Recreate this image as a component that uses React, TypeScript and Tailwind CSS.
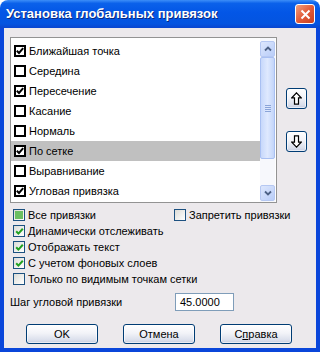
import React from "react";

const listItems = [
  { label: "Ближайшая точка", checked: true },
  { label: "Середина", checked: false },
  { label: "Пересечение", checked: true },
  { label: "Касание", checked: false },
  { label: "Нормаль", checked: false },
  { label: "По сетке", checked: true, selected: true },
  { label: "Выравнивание", checked: false },
  { label: "Угловая привязка", checked: true },
];

function ListCheck({ checked }: { checked: boolean }) {
  return (
    <div className="w-[12px] h-[12px] border-2 border-black bg-white flex items-center justify-center shrink-0">
      {checked && (
        <svg width="8" height="8" viewBox="0 0 8 8">
          <polyline points="0.8,3.8 3,6 7.2,1.2" fill="none" stroke="#000" strokeWidth="2" />
        </svg>
      )}
    </div>
  );
}

function XpCheck({ state }: { state: "on" | "off" | "mixed" }) {
  return (
    <div className="w-[12px] h-[12px] border border-[#1c5180] bg-[linear-gradient(135deg,#dcdcd7,#ffffff)] flex items-center justify-center shrink-0">
      {state === "on" && (
        <svg width="9" height="9" viewBox="0 0 9 9">
          <polyline points="1.2,4.2 3.4,6.6 7.8,1.8" fill="none" stroke="#21a121" strokeWidth="2" />
        </svg>
      )}
      {state === "mixed" && <div className="w-[8px] h-[8px] bg-[#6bbf63]" />}
    </div>
  );
}

function XpButton({ children, className = "" }: { children: React.ReactNode; className?: string }) {
  return (
    <div
      className={
        "flex items-center justify-center border border-[#003c74] rounded-[3px] bg-[linear-gradient(180deg,#ffffff_0%,#f2f3f8_45%,#d9deeb_85%,#c3cbe0_100%)] shadow-[inset_0_0_0_1px_rgba(255,255,255,0.6)] text-[11px] text-black " +
        className
      }
    >
      {children}
    </div>
  );
}

function BlockArrow({ down }: { down?: boolean }) {
  return (
    <svg width="11" height="13" viewBox="0 0 11 13" className={down ? "rotate-180" : ""}>
      <path d="M5.5 0.8 L10.2 5.8 L7.5 5.8 L7.5 12.2 L3.5 12.2 L3.5 5.8 L0.8 5.8 Z" fill="#fff" stroke="#000" strokeWidth="1.2" strokeLinejoin="miter" />
    </svg>
  );
}

function ScrollBtn({ down }: { down?: boolean }) {
  return (
    <div className="h-[16px] rounded-[2px] border border-[#b6c8f2] bg-[linear-gradient(135deg,#dde7fd,#b9cdf8)] flex items-center justify-center">
      <svg width="8" height="6" viewBox="0 0 8 6" className={down ? "rotate-180" : ""}>
        <polyline points="1,4.5 4,1.5 7,4.5" fill="none" stroke="#4d6185" strokeWidth="1.8" />
      </svg>
    </div>
  );
}

export default function App() {
  return (
    <div className="w-[322px] h-[357px] bg-white font-['Liberation_Sans',Arial,sans-serif]">
      <div className="w-[320px] h-[352px] flex flex-col rounded-t-[8px] overflow-hidden">
        {/* title bar */}
        <div className="h-[28px] flex items-center justify-between pl-[6px] pr-[5px] bg-[linear-gradient(180deg,#3d8ef8_0%,#0b61ea_12%,#0356e6_45%,#0454e0_85%,#0a45cf_100%)]">
          <span className="text-white font-bold text-[13px] [text-shadow:1px_1px_#0b2a80]">
            Установка глобальных привязок
          </span>
          <div className="w-[20px] h-[20px] rounded-[3px] border border-white bg-[linear-gradient(135deg,#f0a080,#e25c3a_50%,#c8401f)] flex items-center justify-center">
            <svg width="11" height="11" viewBox="0 0 11 11">
              <path d="M1.5 1.5 L9.5 9.5 M9.5 1.5 L1.5 9.5" stroke="#fff" strokeWidth="2" />
            </svg>
          </div>
        </div>

        {/* body */}
        <div className="flex-1 flex flex-col bg-[#ece9ec] border-x-4 border-b-4 border-[#0a46da] pt-[9px] pl-[6px] text-[11px] text-black">
          <div className="flex">
            {/* list box */}
            <div className="w-[267px] h-[166px] border border-[#939393] bg-white flex">
              <div className="flex-1 pt-[3px]">
                {listItems.map((it) => (
                  <div
                    key={it.label}
                    className={"h-[20px] flex items-center gap-[3px] pl-[3px] " + (it.selected ? "bg-[#c0c0c0]" : "")}
                  >
                    <ListCheck checked={it.checked} />
                    <span>{it.label}</span>
                  </div>
                ))}
              </div>
              <div className="w-[15px] mr-[1px] pt-[3px] pb-[1px] flex flex-col bg-[#f7f8fc]">
                <ScrollBtn />
                <div className="h-[102px] rounded-[2px] border border-[#a9c0f2] bg-[linear-gradient(90deg,#c7d8fb,#dfe9fe_50%,#c3d5fa)] flex flex-col items-center justify-center gap-[1px]">
                  <div className="w-[6px] h-px bg-[#8aa4d8]" />
                  <div className="w-[6px] h-px bg-[#8aa4d8]" />
                  <div className="w-[6px] h-px bg-[#8aa4d8]" />
                  <div className="w-[6px] h-px bg-[#8aa4d8]" />
                </div>
                <div className="flex-1" />
                <ScrollBtn down />
              </div>
            </div>

            {/* move buttons */}
            <div className="flex flex-col pl-[9px] pt-[51px] gap-[22px]">
              <XpButton className="w-[21px] h-[21px]">
                <BlockArrow />
              </XpButton>
              <XpButton className="w-[21px] h-[21px]">
                <BlockArrow down />
              </XpButton>
            </div>
          </div>

          {/* options */}
          <div className="mt-[4px] flex flex-col">
            <div className="h-[16px] flex items-center">
              <div className="w-[161px] flex items-center gap-[3px] pl-[3px]">
                <XpCheck state="mixed" />
                <span>Все привязки</span>
              </div>
              <div className="flex items-center gap-[3px] pl-[3px]">
                <XpCheck state="off" />
                <span>Запретить привязки</span>
              </div>
            </div>
            <div className="h-[16px] flex items-center gap-[3px] pl-[3px]">
              <XpCheck state="on" />
              <span>Динамически отслеживать</span>
            </div>
            <div className="h-[16px] flex items-center gap-[3px] pl-[3px]">
              <XpCheck state="on" />
              <span>Отображать текст</span>
            </div>
            <div className="h-[16px] flex items-center gap-[3px] pl-[3px]">
              <XpCheck state="on" />
              <span>С учетом фоновых слоев</span>
            </div>
            <div className="h-[16px] flex items-center gap-[3px] pl-[3px]">
              <XpCheck state="off" />
              <span>Только по видимым точкам сетки</span>
            </div>
          </div>

          {/* angle step */}
          <div className="mt-[6px] flex items-center">
            <span className="w-[165px]">Шаг угловой привязки</span>
            <div className="w-[59px] h-[18px] border border-[#7f9db9] bg-white flex items-center pl-[4px]">45.0000</div>
          </div>

          {/* buttons */}
          <div className="mt-[13px] flex gap-[25px] pl-[16px]">
            <XpButton className="w-[72px] h-[20px]">OK</XpButton>
            <XpButton className="w-[72px] h-[20px]">Отмена</XpButton>
            <XpButton className="w-[72px] h-[20px]">
              <span>
                С<span className="underline">п</span>равка
              </span>
            </XpButton>
          </div>
        </div>
      </div>
    </div>
  );
}
